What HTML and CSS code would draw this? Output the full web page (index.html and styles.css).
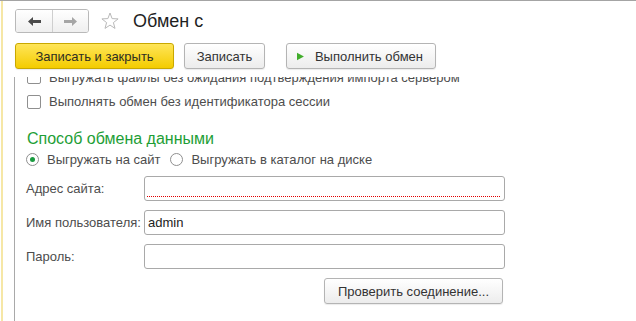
FILE: index.html
```html
<!DOCTYPE html>
<html lang="ru">
<head>
  <meta charset="UTF-8">
  <title>Обмен с</title>
  <link rel="stylesheet" href="styles.css">
</head>
<body>
<div class="window">
  <div class="head">
    <div class="nav-group">
      <button class="nav-btn"><svg width="13" height="9" viewBox="0 0 13 9"><polygon points="0,4.5 5,0 5,3 13,3 13,6 5,6 5,9" fill="#4b4b4b"/></svg></button>
      <button class="nav-btn"><svg width="13" height="9" viewBox="0 0 13 9"><polygon points="13,4.5 8,0 8,3 0,3 0,6 8,6 8,9" fill="#a6a6a6"/></svg></button>
    </div>
    <svg class="star" width="18" height="18" viewBox="0 0 18 18"><polygon points="9,1 11.1,6.6 17.1,6.9 12.4,10.6 14,16.4 9,13.1 4,16.4 5.6,10.6 0.9,6.9 6.9,6.6" fill="none" stroke="#b9b9b9" stroke-width="1" stroke-linejoin="round"/></svg>
    <h1 class="title">Обмен с</h1>
  </div>
  <div class="toolbar">
    <button class="btn btn-default">Записать и закрыть</button>
    <button class="btn btn-save">Записать</button>
    <button class="btn btn-run"><svg width="10" height="11" viewBox="0 0 10 11"><polygon points="0,0 10,5.5 0,11" fill="#41ad2b"/></svg>Выполнить обмен</button>
  </div>
  <div class="content">
    <div class="scroll">
      <label class="check-row first"><span class="check"></span>Выгружать файлы без ожидания подтверждения импорта сервером</label>
      <label class="check-row"><span class="check"></span>Выполнять обмен без идентификатора сессии</label>
      <div class="group-title">Способ обмена данными</div>
      <div class="radio-row">
        <label class="radio-item"><span class="radio on"></span>Выгружать на сайт</label>
        <label class="radio-item"><span class="radio"></span>Выгружать в каталог на диске</label>
      </div>
      <div class="field">
        <span class="field-label">Адрес сайта:</span>
        <div class="input required"></div>
      </div>
      <div class="field">
        <span class="field-label">Имя пользователя:</span>
        <div class="input">admin</div>
      </div>
      <div class="field">
        <span class="field-label">Пароль:</span>
        <div class="input"></div>
      </div>
      <div class="actions">
        <button class="btn btn-check">Проверить соединение...</button>
      </div>
    </div>
  </div>
</div>
</body>
</html>
```

FILE: styles.css
```css
html, body { margin: 0; height: 100%; }
body { font-family: "Liberation Sans", Arial, sans-serif; font-size: 13px; color: #4d4d4d; background: #fff; overflow: hidden; border-top: 1px solid #a4a4a4; box-sizing: border-box; }
.window { margin-left: 1px; border-left: 2px solid #f6e7a6; height: 100%; box-sizing: border-box; display: flex; flex-direction: column; }

.head { display: flex; align-items: center; padding: 8px 0 0 12px; height: 24px; }
.nav-group { display: flex; border: 1px solid #b9b9b9; border-radius: 3px; overflow: hidden; height: 22px; }
.nav-btn { width: 36px; height: 22px; border: none; padding: 0; background: linear-gradient(#ffffff, #efefef); display: flex; align-items: center; justify-content: center; }
.nav-btn + .nav-btn { border-left: 1px solid #cfcfcf; }
.star { margin-left: 12px; }
.title { margin: 0 0 0 14px; font-size: 18px; font-weight: normal; color: #1f1f1f; line-height: 24px; }

.toolbar { display: flex; gap: 10px; padding: 10px 0 0 12px; }
.btn { font-family: inherit; font-size: 13px; color: #333; height: 26px; padding: 0 12px; border: 1px solid #b4b4b4; border-radius: 3px; background: linear-gradient(#ffffff, #ececec); box-shadow: 0 1px 1px rgba(0,0,0,0.08); display: flex; align-items: center; white-space: nowrap; box-sizing: border-box; }
.btn-default { width: 159px; justify-content: center; background: linear-gradient(#ffe559, #f4cc00); border-color: #c9a800; color: #2e2e22; }
.btn-save { width: 81px; justify-content: center; }
.btn-run { margin-left: 11px; width: 150px; padding-left: 10px; }
.btn-run svg { margin-right: 11px; }

.content { flex: 1; margin: 8px 0 0 11px; border-left: 1px solid #a9a9a9; overflow: hidden; }
.scroll { padding-left: 12px; }
.check-row { display: flex; align-items: center; height: 25px; }
.check-row.first { margin-top: -12px; height: 24px; }
.check { width: 12px; height: 12px; border: 1px solid #8f8f8f; border-radius: 2px; background: #fff; margin-right: 8px; }

.group-title { color: #1e9e36; font-size: 16px; line-height: 20px; margin-top: 15px; }
.radio-row { display: flex; align-items: center; height: 21px; gap: 10px; margin-left: -1px; }
.radio-item { display: flex; align-items: center; }
.radio { width: 11px; height: 11px; border: 1px solid #8f8f8f; border-radius: 50%; margin-right: 8px; display: flex; align-items: center; justify-content: center; }
.radio.on::after { content: ""; width: 5px; height: 5px; border-radius: 50%; background: #1a9b40; }

.field { display: flex; align-items: center; margin-top: 9px; }
.radio-row + .field { margin-top: 6px; }
.field-label { width: 118px; margin-left: -1px; }
.input { width: 356px; height: 23px; border: 1px solid #a9a9a9; border-radius: 3px; color: #222; line-height: 23px; padding-left: 3px; box-sizing: content-box; position: relative; }
.input.required::after { content: ""; position: absolute; left: 2px; right: 4px; bottom: 3px; border-bottom: 1px dotted #e00000; }

.actions { display: flex; justify-content: flex-end; width: 476px; margin-top: 9px; }
.btn-check { width: 179px; justify-content: center; }
```
